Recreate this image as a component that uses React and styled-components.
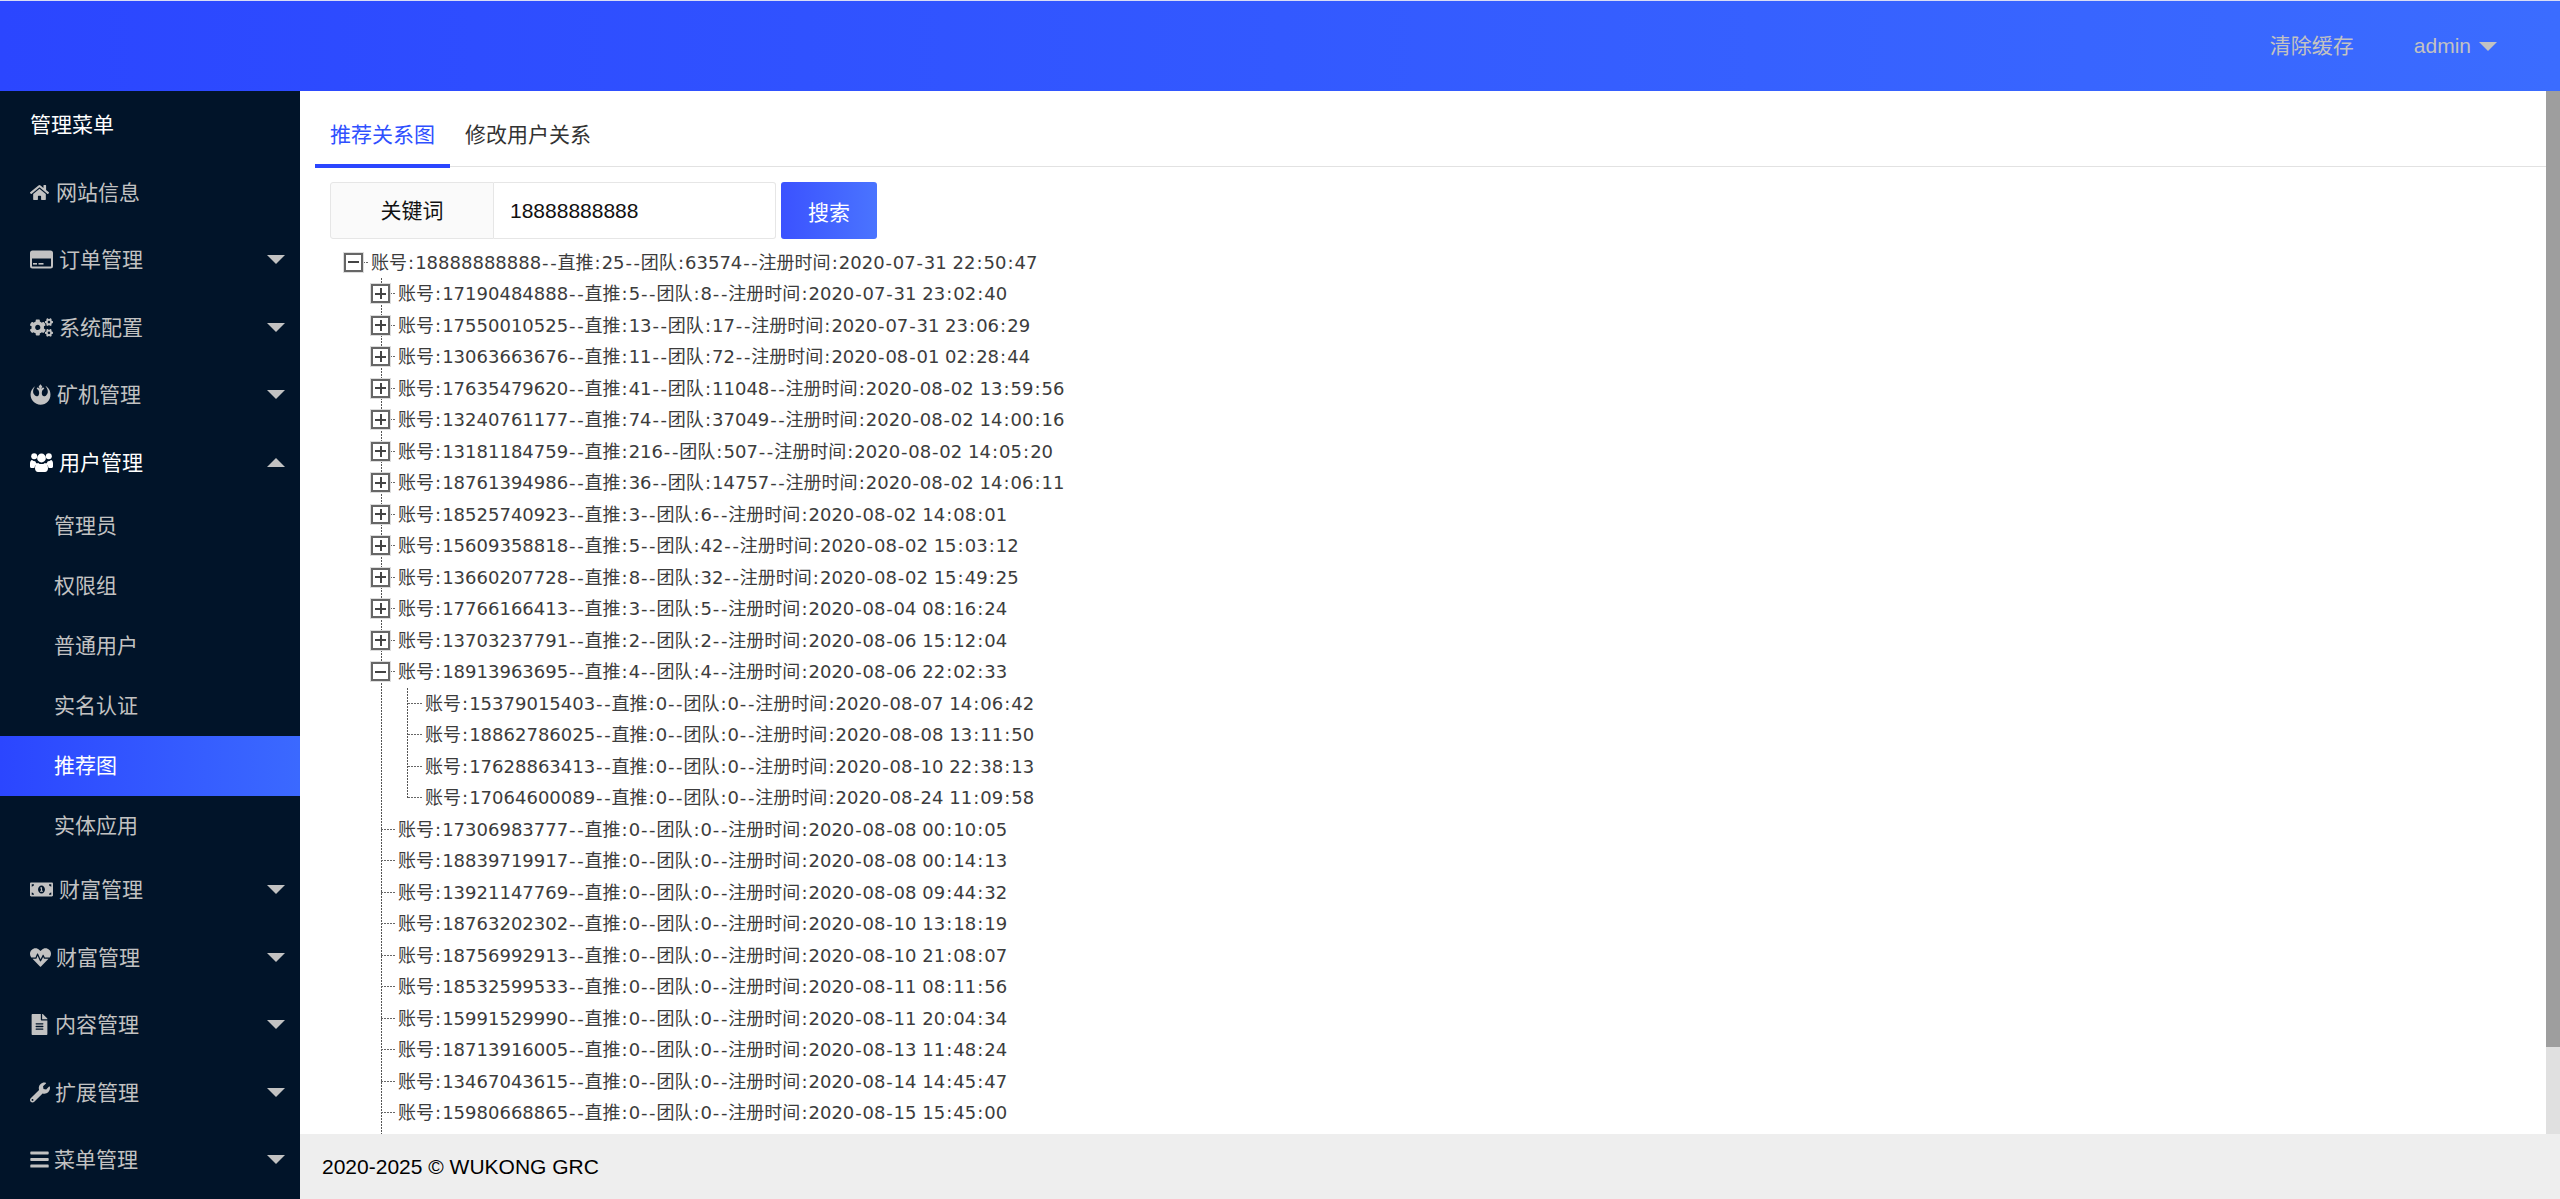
import React from "react";
import styled, { createGlobalStyle } from "styled-components";
import { FaHome, FaCogs, FaRebel, FaMoneyBillAlt, FaHeartbeat, FaFileAlt, FaWrench, FaBars } from "react-icons/fa";

const UI = `"Liberation Sans", "Noto Sans CJK SC", sans-serif`;
const TREE = `"DejaVu Sans", "Noto Sans CJK SC", sans-serif`;
const DOTS_V = "repeating-linear-gradient(to bottom, #555 0 2px, transparent 2px 3px)";
const DOTS_H = "repeating-linear-gradient(to right, #666 0 2px, transparent 2px 3px)";

const Global = createGlobalStyle`
  html, body { margin: 0; padding: 0; height: 100%; overflow: hidden; background: #fff; }
  #root { height: 100%; }
  * { box-sizing: border-box; }
`;

const Page = styled.div`
  height: 1199px; display: flex; flex-direction: column; overflow: hidden;
  font: 21px/1.5 ${UI}; color: #333;
`;
const Header = styled.header`
  height: 91px; flex: none; display: flex; justify-content: flex-end; align-items: center;
  padding-right: 63px; border-top: 1px solid #d9dcf5;
  background: linear-gradient(90deg, #2b46ff 0%, #3b6cff 100%);
  color: #c2c2c2;
`;
const HeaderLink = styled.span`
  margin-right: 60px; line-height: 90px;
`;
const Caret = styled.i`
  display: inline-block; width: 0; height: 0; border-style: solid; border-color: transparent;
  border-width: ${p => (p.$up ? "0 9px 9px" : "9px 9px 0")};
  ${p => (p.$up ? "border-bottom-color: #c2c2c2;" : "border-top-color: #c2c2c2;")}
`;
const HeaderUser = styled.span`
  display: flex; align-items: center; gap: 8px;
`;
const Body = styled.div`
  flex: 1; min-height: 0; display: flex;
`;
const Sidebar = styled.nav`
  width: 300px; flex: none; background: #011429; overflow: hidden;
`;
const MenuHead = styled.div`
  height: 67.5px; padding-left: 30px; display: flex; align-items: center; color: #fff;
`;
const MenuRow = styled.div`
  height: 67.5px; padding: 0 15px 0 30px; display: flex; align-items: center;
  color: ${p => (p.$open ? "#fff" : "#c2c2c2")};
`;
const IconBox = styled.span`
  flex: none; width: ${p => p.$w}px; margin-right: ${p => p.$gap}px; display: flex; justify-content: flex-start;
  svg { width: ${p => p.$w}px; height: ${p => p.$h || 21}px; display: block; }
`;
const MenuLabel = styled.span`
  flex: 1;
`;
const SubRow = styled.div`
  height: 60px; padding-left: 54px; display: flex; align-items: center;
  color: ${p => (p.$active ? "#fff" : "#c2c2c2")};
  background: ${p => (p.$active ? "linear-gradient(90deg, #2b46ff 0%, #3b69ff 100%)" : "transparent")};
`;
const Main = styled.main`
  flex: 1; min-width: 0; display: flex; flex-direction: column;
`;
const Upper = styled.div`
  flex: 1; min-height: 0; display: flex;
`;
const Content = styled.div`
  flex: 1; min-width: 0; overflow: hidden; padding: 15px 0 0 15px; background: #fff;
`;
const ScrollTrack = styled.div`
  width: 14px; flex: none; background: #e0e0e0;
`;
const ScrollThumb = styled.div`
  height: 956px; background: #9e9e9e;
`;
const TabBar = styled.div`
  height: 61px; display: flex; border-bottom: 1px solid #e2e2e2;
`;
const Tab = styled.div`
  position: relative; height: 60px; line-height: 58px; padding: 0 15px;
  color: ${p => (p.$active ? "#2f50ff" : "#333")};
  ${p => p.$active && `&::after { content: ""; position: absolute; left: 0; right: 0; bottom: -2px; height: 4px; background: #2b46ff; }`}
`;
const SearchForm = styled.form`
  display: flex; margin: 15px 0 0 15px; height: 57px;
`;
const SearchLabel = styled.label`
  width: 164px; border: 1px solid #e6e6e6; border-radius: 3px 0 0 3px; background: #fafafa;
  display: flex; align-items: center; justify-content: center; color: #111;
`;
const SearchInput = styled.input`
  width: 282px; border: 1px solid #e6e6e6; border-left: 0; border-radius: 0 3px 3px 0;
  padding: 0 0 0 16px; font: 21px ${UI}; color: #111; background: #fff; outline: none;
`;
const SearchButton = styled.button`
  width: 96px; margin-left: 5px; border: 0; border-radius: 3px; color: #fff; font: 21px ${UI};
  background: linear-gradient(90deg, #3b52ff 0%, #4a74ff 100%);
`;
const Tree = styled.div`
  margin: 7.5px 0 0 29px; font: 18px/31.5px ${TREE}; color: #3c3c3c; white-space: nowrap;
`;
const Row = styled.div`
  height: 31.5px; display: flex; align-items: center;
`;
const Branch = styled.div`
  position: relative; padding-left: 27px;
  &::before {
    content: ""; position: absolute; top: 0; width: 1px;
    left: ${p => (p.$open ? "37px" : "36px")};
    bottom: ${p => (p.$open ? "-12px" : "15.75px")};
    background: ${DOTS_V};
  }
`;
const Switch = styled.span`
  position: relative; z-index: 1; flex: none; width: 19px; height: 19px; background: #fff;
  border: 2px solid #666; box-shadow: 0 0 0 1px #ddd; margin-right: 8px;
  &::before { content: ""; position: absolute; left: 2px; right: 2px; top: 6.5px; height: 2px; background: #444; }
  ${p => p.$plus && `&::after { content: ""; position: absolute; top: 2px; bottom: 2px; left: 6.5px; width: 2px; background: #444; }`}
`;
const Leaf = styled.span`
  flex: none; width: 27px; height: 1px; position: relative;
  &::before { content: ""; position: absolute; left: 10px; width: 15px; top: 0; height: 1px; background: ${DOTS_H}; }
`;
const NodeText = styled.span`
  display: block; position: relative;
  ${p => p.$linked && `&::before { content: ""; position: absolute; left: -8px; width: 5px; top: 15px; height: 1px; background: ${DOTS_H}; }`}
`;
/* The reference's Verdana has wider ":" and "-" than DejaVu Sans: same digits, looser punctuation. */
const Punct = styled.span`
  padding: 0 ${p => p.$pad}px;
`;
const Footer = styled.footer`
  height: 65px; flex: none; background: #eee; color: #000; padding-left: 22px;
  display: flex; align-items: center;
`;

const Label = ({ a, d, t, r }) => {
  const s = `账号:${a}--直推:${d}--团队:${t}--注册时间:${r}`;
  return s.split(/([:-])/).map((part, i) =>
    part === ":" ? <Punct key={i} $pad={1.05}>:</Punct>
    : part === "-" ? <Punct key={i} $pad={0.83}>-</Punct>
    : part
  );
};

const CardIcon = () => (
  <svg viewBox="0 0 23 21" fill="currentColor">
    <path fillRule="evenodd" d="M2.5 1.5h18a2.5 2.5 0 0 1 2.5 2.5v13a2.5 2.5 0 0 1-2.5 2.5h-18A2.5 2.5 0 0 1 0 17V4a2.5 2.5 0 0 1 2.5-2.5zM2 9.5V17a.5.5 0 0 0 .5.5h18a.5.5 0 0 0 .5-.5V9.5z" />
    <rect x="3" y="14" width="4" height="1.6" />
    <rect x="8.5" y="14" width="5" height="1.6" />
  </svg>
);
const UsersIcon = () => (
  <svg viewBox="0 0 23 21" fill="currentColor">
    <circle cx="4.2" cy="4.2" r="3" />
    <circle cx="18.8" cy="4.2" r="3" />
    <circle cx="11.5" cy="6" r="4.4" />
    <path d="M0 11.5c0-2 1-3.5 2-3.5.9.8 2 1.2 3.2 1.2.5 1.3 1.3 2.2 2.3 2.9-1.8.7-2.9 2.2-3.1 4H1.5C.6 16 0 15.4 0 14.5z" />
    <path d="M23 11.5c0-2-1-3.5-2-3.5-.9.8-2 1.2-3.2 1.2-.5 1.3-1.3 2.2-2.3 2.9 1.8.7 2.9 2.2 3.1 4h2.900c.9 0 1.500-.6 1.500-1.500z" />
    <path d="M8.200 10.900c.9.8 2 1.200 3.300 1.200s2.400-.4 3.300-1.200c2 .2 3.200 2.300 3.200 5.300 0 2.300-1.300 3.800-3 3.800H8c-1.700 0-3-1.500-3-3.800 0-3 1.200-5.100 3.200-5.300z" />
  </svg>
);

const plain = [
  ["17190484888", 5, 8, "2020-07-31 23:02:40"],
  ["17550010525", 13, 17, "2020-07-31 23:06:29"],
  ["13063663676", 11, 72, "2020-08-01 02:28:44"],
  ["17635479620", 41, 11048, "2020-08-02 13:59:56"],
  ["13240761177", 74, 37049, "2020-08-02 14:00:16"],
  ["13181184759", 216, 507, "2020-08-02 14:05:20"],
  ["18761394986", 36, 14757, "2020-08-02 14:06:11"],
  ["18525740923", 3, 6, "2020-08-02 14:08:01"],
  ["15609358818", 5, 42, "2020-08-02 15:03:12"],
  ["13660207728", 8, 32, "2020-08-02 15:49:25"],
  ["17766166413", 3, 5, "2020-08-04 08:16:24"],
  ["13703237791", 2, 2, "2020-08-06 15:12:04"],
];
const kids = [
  ["15379015403", "2020-08-07 14:06:42"],
  ["18862786025", "2020-08-08 13:11:50"],
  ["17628863413", "2020-08-10 22:38:13"],
  ["17064600089", "2020-08-24 11:09:58"],
];
const leaves = [
  ["17306983777", "2020-08-08 00:10:05"],
  ["18839719917", "2020-08-08 00:14:13"],
  ["13921147769", "2020-08-08 09:44:32"],
  ["18763202302", "2020-08-10 13:18:19"],
  ["18756992913", "2020-08-10 21:08:07"],
  ["18532599533", "2020-08-11 08:11:56"],
  ["15991529990", "2020-08-11 20:04:34"],
  ["18713916005", "2020-08-13 11:48:24"],
  ["13467043615", "2020-08-14 14:45:47"],
  ["15980668865", "2020-08-15 15:45:00"],
];

const Item = ({ icon: I, w, gap, h, label }) => (
  <MenuRow>
    <IconBox $w={w} $gap={gap} $h={h}><I /></IconBox>
    <MenuLabel>{label}</MenuLabel>
    <Caret />
  </MenuRow>
);

export default function App() {
  return (
    <Page>
      <Global />
      <Header>
        <HeaderLink>清除缓存</HeaderLink>
        <HeaderUser>admin <Caret /></HeaderUser>
      </Header>
      <Body>
        <Sidebar>
          <MenuHead>管理菜单</MenuHead>
          <MenuRow>
            <IconBox $w={19} $gap={7}><FaHome /></IconBox>
            <MenuLabel>网站信息</MenuLabel>
          </MenuRow>
          <Item icon={CardIcon} w={23} gap={6} label="订单管理" />
          <Item icon={FaCogs} w={23} gap={6} label="系统配置" />
          <Item icon={FaRebel} w={21} gap={6} label="矿机管理" />
          <MenuRow $open>
            <IconBox $w={23} $gap={6}><UsersIcon /></IconBox>
            <MenuLabel>用户管理</MenuLabel>
            <Caret $up />
          </MenuRow>
          <SubRow>管理员</SubRow>
          <SubRow>权限组</SubRow>
          <SubRow>普通用户</SubRow>
          <SubRow>实名认证</SubRow>
          <SubRow $active>推荐图</SubRow>
          <SubRow>实体应用</SubRow>
          <Item icon={FaMoneyBillAlt} w={23} gap={6} label="财富管理" />
          <Item icon={FaHeartbeat} w={21} gap={5} label="财富管理" />
          <Item icon={FaFileAlt} w={19} gap={6} label="内容管理" />
          <Item icon={FaWrench} w={20} gap={5} label="扩展管理" />
          <Item icon={FaBars} w={19} gap={5} label="菜单管理" />
        </Sidebar>
        <Main>
          <Upper>
            <Content>
              <TabBar>
                <Tab $active>推荐关系图</Tab>
                <Tab>修改用户关系</Tab>
              </TabBar>
              <SearchForm>
                <SearchLabel>关键词</SearchLabel>
                <SearchInput defaultValue="18888888888" />
                <SearchButton type="button">搜索</SearchButton>
              </SearchForm>
              <Tree>
                <Row>
                  <Switch />
                  <NodeText $linked><Label a="18888888888" d={25} t={63574} r="2020-07-31 22:50:47" /></NodeText>
                </Row>
                <Branch $open>
                  {plain.map(n => (
                    <Row key={n[0]}>
                      <Switch $plus />
                      <NodeText $linked><Label a={n[0]} d={n[1]} t={n[2]} r={n[3]} /></NodeText>
                    </Row>
                  ))}
                  <Row>
                    <Switch />
                    <NodeText $linked><Label a="18913963695" d={4} t={4} r="2020-08-06 22:02:33" /></NodeText>
                  </Row>
                  <Branch>
                    {kids.map(n => (
                      <Row key={n[0]}>
                        <Leaf />
                        <NodeText><Label a={n[0]} d={0} t={0} r={n[1]} /></NodeText>
                      </Row>
                    ))}
                  </Branch>
                  {leaves.map(n => (
                    <Row key={n[0]}>
                      <Leaf />
                      <NodeText><Label a={n[0]} d={0} t={0} r={n[1]} /></NodeText>
                    </Row>
                  ))}
                </Branch>
              </Tree>
            </Content>
            <ScrollTrack><ScrollThumb /></ScrollTrack>
          </Upper>
          <Footer>2020-2025 © WUKONG GRC</Footer>
        </Main>
      </Body>
    </Page>
  );
}
